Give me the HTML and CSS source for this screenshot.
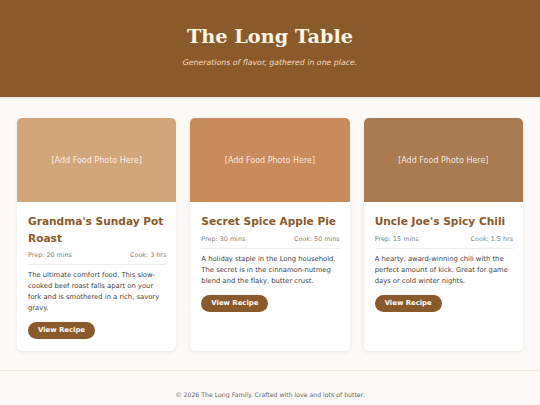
FILE: index.html
```html
<!DOCTYPE html>
<html lang="en">
<head>
<meta charset="utf-8">
<title>The Long Table</title>
<link rel="stylesheet" href="styles.css">
</head>
<body>
<header class="site-header">
  <h1 class="site-title">The Long Table</h1>
  <p class="site-tagline">Generations of flavor, gathered in one place.</p>
</header>
<main class="recipes">
  <article class="card">
    <div class="card-photo photo-1">[Add Food Photo Here]</div>
    <div class="card-body">
      <h2 class="card-title">Grandma's Sunday Pot Roast</h2>
      <div class="card-meta"><span>Prep: 20 mins</span><span>Cook: 3 hrs</span></div>
      <p class="card-text">The ultimate comfort food. This slow-cooked beef roast falls apart on your fork and is smothered in a rich, savory gravy.</p>
      <a class="btn" href="#">View Recipe</a>
    </div>
  </article>
  <article class="card">
    <div class="card-photo photo-2">[Add Food Photo Here]</div>
    <div class="card-body">
      <h2 class="card-title">Secret Spice Apple Pie</h2>
      <div class="card-meta"><span>Prep: 30 mins</span><span>Cook: 50 mins</span></div>
      <p class="card-text">A holiday staple in the Long household. The secret is in the cinnamon-nutmeg blend and the flaky, butter crust.</p>
      <a class="btn" href="#">View Recipe</a>
    </div>
  </article>
  <article class="card">
    <div class="card-photo photo-3">[Add Food Photo Here]</div>
    <div class="card-body">
      <h2 class="card-title">Uncle Joe's Spicy Chili</h2>
      <div class="card-meta"><span>Prep: 15 mins</span><span>Cook: 1.5 hrs</span></div>
      <p class="card-text">A hearty, award-winning chili with the perfect amount of kick. Great for game days or cold winter nights.</p>
      <a class="btn" href="#">View Recipe</a>
    </div>
  </article>
</main>
<footer class="site-footer">
  <p>&copy; 2026 The Long Family. Crafted with love and lots of butter.</p>
</footer>
</body>
</html>
```
FILE: styles.css
```css
* { box-sizing: border-box; }
html, body { margin: 0; padding: 0; }
body {
  background: #fcfaf6;
  font-family: "DejaVu Sans", Verdana, sans-serif;
  color: #333;
}
.site-header {
  background: #8b5a2b;
  height: 97px;
  text-align: center;
  padding-top: 23px;
  box-shadow: 0 1px 3px rgba(0,0,0,0.12);
}
.site-title {
  margin: 0;
  font-family: "DejaVu Serif", Georgia, serif;
  font-weight: bold;
  font-size: 19.3px;
  line-height: 28px;
  color: #fdf5e6;
}
.site-tagline {
  margin: 6px 0 0;
  font-style: italic;
  font-size: 7.8px;
  line-height: 12px;
  color: #f1dcc0;
}
.recipes {
  display: grid;
  grid-template-columns: repeat(3, 1fr);
  gap: 14px;
  padding: 21px 17px 19px;
}
.card {
  background: #fff;
  border-radius: 5px;
  overflow: hidden;
  box-shadow: 0 1px 4px rgba(0,0,0,0.08);
  display: flex;
  flex-direction: column;
}
.card-photo {
  height: 84px;
  display: flex;
  align-items: center;
  justify-content: center;
  color: rgba(255,255,255,0.85);
  font-size: 8px;
}
.photo-1 { background: #d3a679; }
.photo-2 { background: #c98a5c; }
.photo-3 { background: #a87b51; }
.card-body {
  padding: 11px 10px 12px 11px;
}
.card-title {
  margin: 0;
  font-size: 10.6px;
  line-height: 16.5px;
  font-weight: bold;
  color: #8b5a2b;
}
.card-meta {
  display: flex;
  justify-content: space-between;
  font-size: 6.4px;
  color: #808080;
  margin-top: 5px;
  padding-bottom: 5px;
  border-bottom: 1px solid #eee;
}
.card-text {
  margin: 5px 0 0;
  font-size: 6.8px;
  line-height: 11px;
  color: #444;
}
.btn {
  display: inline-block;
  margin-top: 8px;
  background: #8b5a2b;
  color: #fff;
  text-decoration: none;
  font-size: 6.9px;
  font-weight: bold;
  line-height: 17px;
  padding: 0 10px;
  border-radius: 9px;
}
.site-footer {
  border-top: 1px solid #ece8e2;
  text-align: center;
  padding: 20px 0;
}
.site-footer p {
  margin: 0;
  font-size: 6.2px;
  color: #666;
}
```
